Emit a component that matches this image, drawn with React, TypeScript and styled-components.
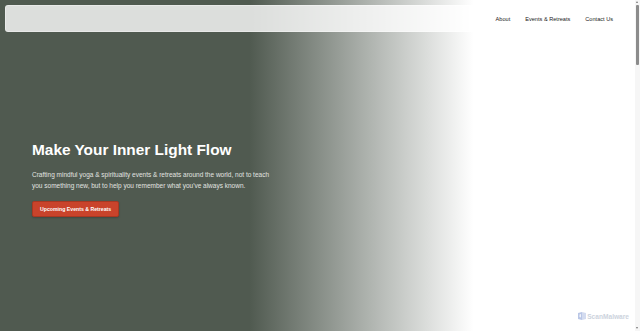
import React from "react";
import styled, { createGlobalStyle } from "styled-components";

const Global = createGlobalStyle`
  html, body { margin: 0; padding: 0; height: 100%; overflow: hidden; }
  body { font-family: "Liberation Sans", Arial, sans-serif; }
  #root { height: 100%; }
`;

const Page = styled.div`
  position: relative;
  height: 331px;
  width: 100%;
  display: flex;
  flex-direction: column;
  background: linear-gradient(to right, #505a50 0%, #505a50 39%, #a9aea9 56.5%, #ffffff 74%, #ffffff 100%);
`;

const Header = styled.header`
  margin: 5px 5px 0 5px;
  height: 27px;
  box-sizing: border-box;
  border-radius: 3px;
  background: rgba(255, 255, 255, 0.8);
  border: 1px solid rgba(255, 255, 255, 0.35);
  display: flex;
  align-items: center;
  justify-content: flex-end;
  padding-right: 21px;
  gap: 15px;
`;

const NavLink = styled.a`
  font-size: 5.6px;
  color: #222222;
  text-decoration: none;
`;

const Hero = styled.section`
  flex: 1;
  display: flex;
  flex-direction: column;
  align-items: flex-start;
  padding: 108px 0 0 32px;
`;

const Title = styled.h1`
  margin: 0;
  font-size: 15.4px;
  line-height: 20px;
  font-weight: 700;
  color: #ffffff;
`;

const Lead = styled.p`
  margin: 10px 0 0 0;
  font-size: 6.5px;
  line-height: 10.5px;
  color: #e2e4e0;
  max-width: 242px;
`;

const Cta = styled.button`
  margin-top: 10px;
  height: 16px;
  padding: 0 7px;
  border-radius: 2px;
  border: 1px solid #a83822;
  background: #c9432b;
  color: #ffffff;
  font-family: "Liberation Sans", Arial, sans-serif;
  font-weight: 700;
  font-size: 5.2px;
  box-shadow: 0 1px 2px rgba(0,0,0,0.2);
`;

const Watermark = styled.div`
  position: absolute;
  right: 11px;
  bottom: 11px;
  display: flex;
  align-items: center;
  gap: 1px;
  font-size: 6.6px;
  font-weight: 700;
  color: #cdd3dd;
`;

const Scrollbar = styled.div`
  position: absolute;
  top: 0;
  right: 0;
  width: 5px;
  height: 331px;
  background: #f6f6f6;
`;

const Thumb = styled.div`
  position: absolute;
  top: 5px;
  left: 1px;
  width: 3px;
  height: 60px;
  border-radius: 1px;
  background: #8c8c8c;
`;

const Arrow = styled.div<{ $down?: boolean }>`
  position: absolute;
  left: 1px;
  ${(p) => (p.$down ? "bottom: 2px;" : "top: 1px;")}
  width: 0;
  height: 0;
  border-left: 1.5px solid transparent;
  border-right: 1.5px solid transparent;
  ${(p) => (p.$down ? "border-top: 2px solid #777;" : "border-bottom: 2px solid #777;")}
`;

export default function App() {
  return (
    <>
      <Global />
      <Page>
        <Header>
          <NavLink href="#">About</NavLink>
          <NavLink href="#">Events &amp; Retreats</NavLink>
          <NavLink href="#">Contact Us</NavLink>
        </Header>
        <Hero>
          <Title>Make Your Inner Light Flow</Title>
          <Lead>
            Crafting mindful yoga &amp; spirituality events &amp; retreats around the world, not to teach you
            something new, but to help you remember what you've always known.
          </Lead>
          <Cta>Upcoming Events &amp; Retreats</Cta>
        </Hero>
        <Watermark>
          <svg width="8" height="8" viewBox="0 0 8 8">
            <path d="M0 1 L4 0 L4 8 L0 7 Z" fill="#b9c6e6" />
            <path d="M4 0 L8 1 L8 7 L4 8 Z" fill="#d3dbef" />
            <path d="M1.5 2.5 L3 2 L3 5.5 L1.5 5 Z" fill="#ffffff" opacity="0.8" />
          </svg>
          ScanMalware
        </Watermark>
        <Scrollbar>
          <Arrow />
          <Thumb />
          <Arrow $down />
        </Scrollbar>
      </Page>
    </>
  );
}
